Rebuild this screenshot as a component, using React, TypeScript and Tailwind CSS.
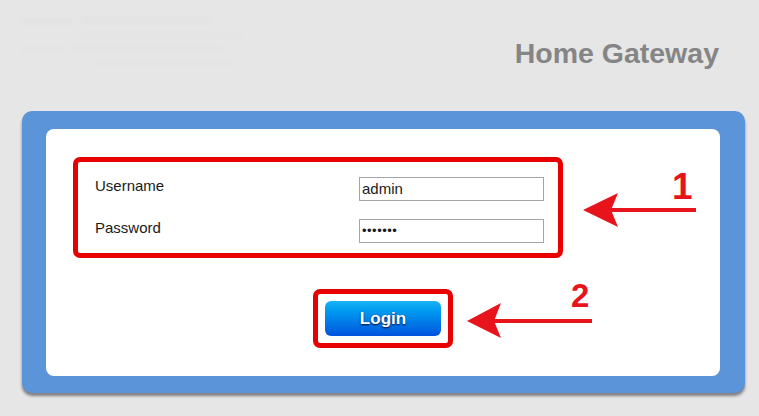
export default function App() {
  return (
    <div
      className="relative w-[759px] h-[416px] overflow-hidden bg-[#e6e6e6]"
      style={{ fontFamily: '"Liberation Sans", Arial, sans-serif' }}
    >
      {/* header */}
      <div className="flex justify-between h-[111px] pl-[22px] pr-[40px]">
        <div className="mt-[14px] w-[228px] h-[84px] flex flex-col gap-[9px] pt-[4px] blur-[2px] opacity-30">
          <div className="flex gap-[10px]">
            <div className="w-[50px] h-[6px] bg-[#d9d9d9]" />
            <div className="w-[130px] h-[6px] bg-[#dcdcdc]" />
          </div>
          <div className="ml-[60px] w-[160px] h-[5px] bg-[#dedede]" />
          <div className="flex gap-[10px]">
            <div className="w-[40px] h-[5px] bg-[#dddddd]" />
            <div className="w-[150px] h-[5px] bg-[#dcdcdc]" />
          </div>
          <div className="ml-[70px] w-[140px] h-[5px] bg-[#e0e0e0]" />
        </div>
        <div className="pt-[39px] text-[28.5px] leading-none font-bold text-[#858585]">Home Gateway</div>
      </div>

      {/* blue panel */}
      <div className="ml-[22px] w-[723px] h-[282px] rounded-[10px] bg-[#5b94d8] pt-[18px] pl-[24px] pr-[25px] pb-[17px] shadow-[0_3px_3px_rgba(0,0,0,0.45)]">
        <div className="h-full w-full rounded-[8px] bg-white pt-[28px] pl-[27px]">
          <div className="w-[490px] h-[101px] rounded-[7px] border-[5px] border-[#e80000] pt-[15px] pl-[17px] flex flex-col gap-[18px]">
            <div className="flex items-start">
              <div className="w-[264px] text-[15px] leading-[18px] text-[#1a1a1a]">Username</div>
              <div className="w-[185px] h-[24px] border border-[#a5a5a5] pl-[2px] flex items-center text-[15px] text-[#1a1a1a]">
                admin
              </div>
            </div>
            <div className="flex items-start">
              <div className="w-[264px] text-[15px] leading-[18px] text-[#1a1a1a]">Password</div>
              <div className="w-[185px] h-[24px] border border-[#a5a5a5] pl-[2px] flex items-center text-[13px] tracking-[0.5px] text-[#1a1a1a]">
                •••••••
              </div>
            </div>
          </div>

          <div className="mt-[31px] ml-[240px] w-[140px] h-[59px] rounded-[7px] border-[5px] border-[#e80000] p-[7px]">
            <div className="h-[35px] w-[116px] rounded-[6px] bg-gradient-to-b from-[#19b4f6] to-[#0052dd] flex items-center justify-center text-[17px] font-bold text-white [text-shadow:0_1px_2px_rgba(0,0,40,0.95)]">
              Login
            </div>
          </div>
        </div>
      </div>

      {/* annotations */}
      <svg className="absolute left-0 top-0" width="759" height="416" viewBox="0 0 759 416">
        <rect x="610" y="208" width="86" height="4" fill="#e8141c" />
        <polygon points="583,210 618,193 611,210 618,227" fill="#e8141c" />
        <rect x="493" y="319" width="99" height="4" fill="#e8141c" />
        <polygon points="467,321 501,303 494,321 501,338" fill="#e8141c" />
      </svg>
      <div className="absolute left-[672px] top-[168px] text-[37px] leading-none font-bold text-[#e8141c]">1</div>
      <div className="absolute left-[571px] top-[279px] text-[33px] leading-none font-bold text-[#e8141c]">2</div>
    </div>
  );
}
